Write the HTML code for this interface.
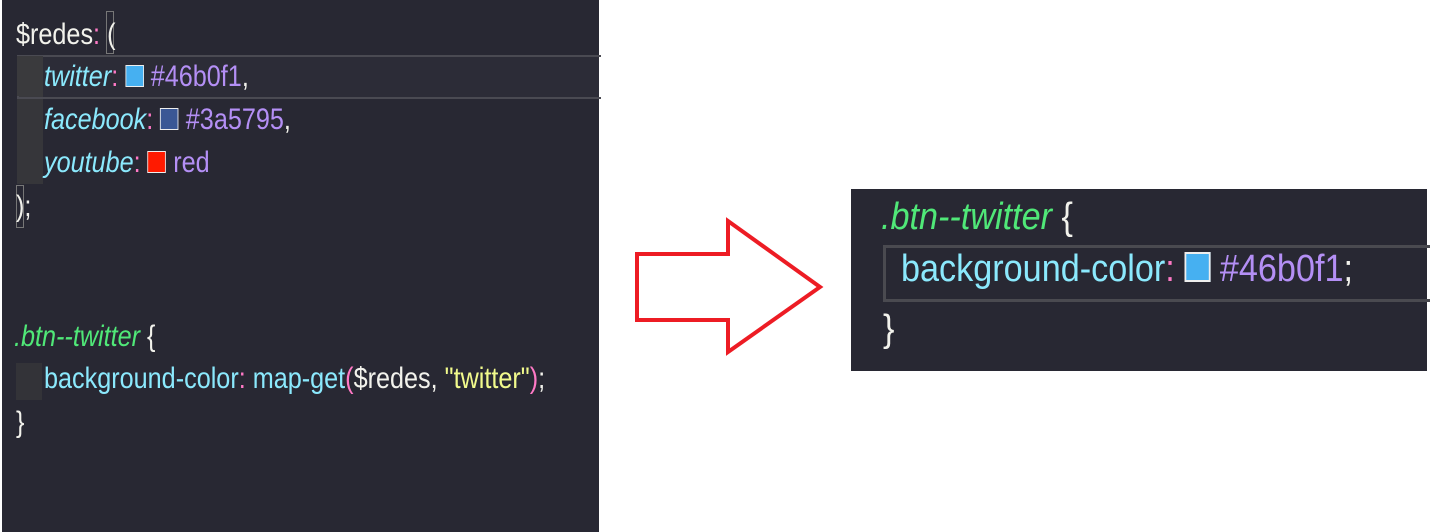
<!DOCTYPE html>
<html><head><meta charset="utf-8"><style>
body{margin:0;background:#fff;width:1430px;height:532px;position:relative;overflow:hidden;font-family:"Liberation Sans",sans-serif}
.pl{position:absolute;left:2px;top:0;width:597px;height:532px;background:#282833}
.pr{position:absolute;left:851px;top:189px;width:576px;height:182px;background:#282833}
.ln{position:absolute;white-space:pre;line-height:1.117;transform-origin:0 0}
.L{font-size:30px;transform:scaleX(0.84)}
.R{font-size:38px;transform:scaleX(0.9)}
.w{color:#f2f2ec}.p{color:#ff79c6}.c{color:#8be9fd}.v{color:#b48ff5}.g{color:#50e878}.y{color:#f1fa8c}
i{font-style:italic}
.sw{display:inline-block;border:1px solid #eee;vertical-align:-1px}
</style></head><body>
<div class="pl">
 <div style="position:absolute;left:15px;top:56px;width:26px;height:128px;background:#36363a"></div>
 <div style="position:absolute;left:15px;top:55px;width:582px;height:40px;border:2px solid #4a4a52;border-right:none;background:rgba(255,255,255,0.02)"></div>
 <div style="position:absolute;left:15px;top:56px;width:26px;height:40px;background:#3a3a3d"></div>
 <div style="position:absolute;left:104px;top:11px;width:6px;height:41px;border:1px solid #777"></div>
 <div style="position:absolute;left:14px;top:185px;width:6px;height:41px;border:1px solid #777"></div>
 <div style="position:absolute;left:14px;top:363px;width:26px;height:37px;background:#333338"></div>
 <div class="ln L w" style="left:14px;top:18px">$redes<span class="p">:</span> (</div>
 <div class="ln L" style="left:42px;top:60px"><i class="c">twitter</i><span class="p">:</span> <span class="sw" style="width:20px;height:20px;background:#46b0f1"></span> <span class="v">#46b0f1</span><span class="w">,</span></div>
 <div class="ln L" style="left:42px;top:103px"><i class="c">facebook</i><span class="p">:</span> <span class="sw" style="width:20px;height:20px;background:#3a5795"></span> <span class="v">#3a5795</span><span class="w">,</span></div>
 <div class="ln L" style="left:42px;top:146px"><i class="c">youtube</i><span class="p">:</span> <span class="sw" style="width:20px;height:20px;background:#ff1a00"></span> <span class="v">red</span></div>
 <div class="ln L w" style="left:14px;top:190px">);</div>
 <div class="ln L" style="left:12px;top:320px"><i class="g">.btn--twitter</i><span class="w"> {</span></div>
 <div class="ln L" style="left:42px;top:362px"><span class="c">background-color</span><span class="p">:</span><span class="c"> map-get</span><span class="p">(</span><span class="w">$redes, </span><span class="y">"twitter"</span><span class="p">)</span><span class="w">;</span></div>
 <div class="ln L w" style="left:14px;top:406px">}</div>
</div>
<svg style="position:absolute;left:0;top:0" width="1430" height="532"><polygon points="637,254 728,254 728,221 820,287 728,352 728,320 637,320" fill="none" stroke="#ed1c24" stroke-width="4"/></svg>
<div class="pr">
 <div style="position:absolute;left:32px;top:56px;width:546px;height:51px;border:3px solid #4a4a50;border-right:none"></div>
 <div class="ln R" style="left:30px;top:7px"><i class="g">.btn--twitter</i><span class="w"> {</span></div>
 <div class="ln R" style="left:50px;top:59px"><span class="c">background-color</span><span class="p">:</span> <span class="sw" style="width:25px;height:26px;background:#46b0f1;border-width:2px"></span> <span class="v">#46b0f1</span><span class="w">;</span></div>
 <div class="ln R w" style="left:32px;top:119px">}</div>
</div>
</body></html>
